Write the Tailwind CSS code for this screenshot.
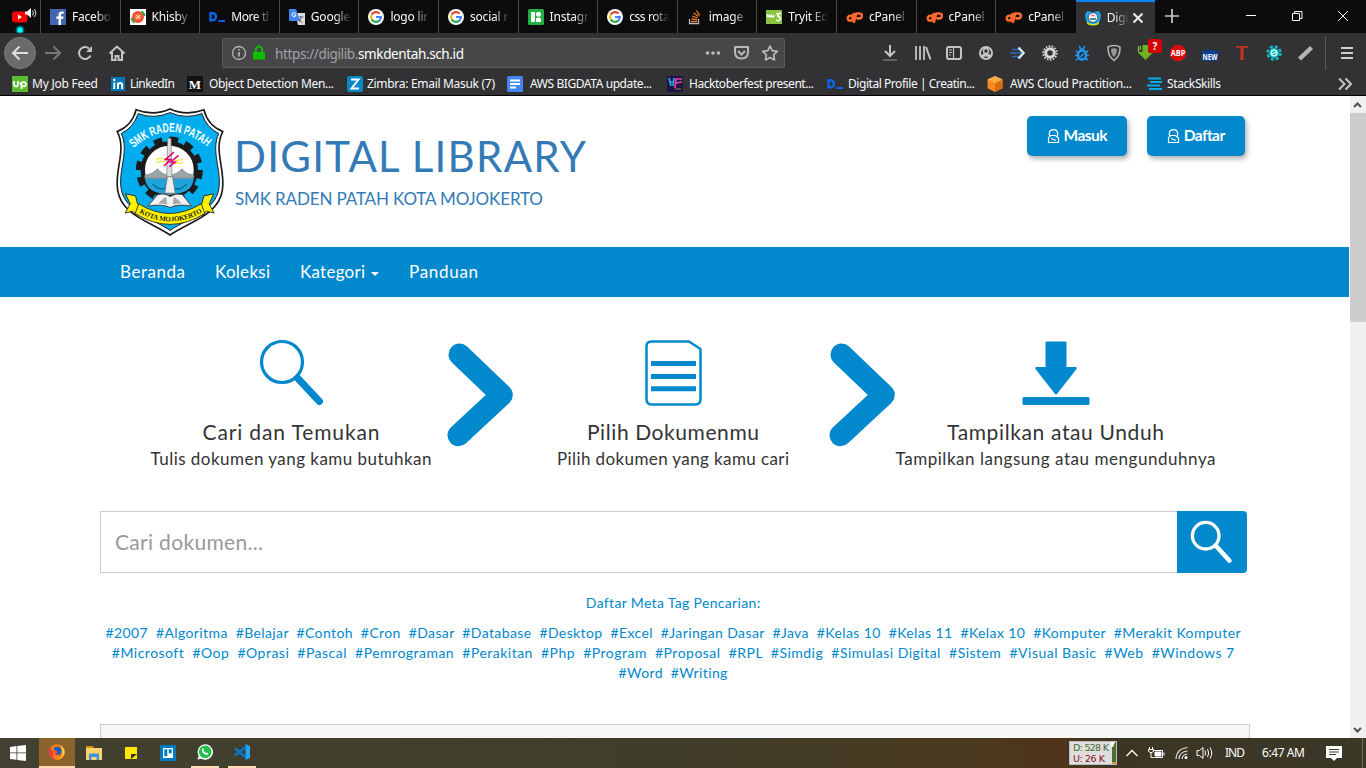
<!DOCTYPE html>
<html lang="id">
<head>
<meta charset="utf-8">
<title>Digital Library - SMK Raden Patah Kota Mojokerto</title>
<script src="https://cdn.jsdelivr.net/npm/@tailwindcss/browser@4"></script>
</head>
<body class="w-[1366px] h-[768px] overflow-hidden flex flex-col bg-white font-['Noto_Sans','Open_Sans',sans-serif] text-xs whitespace-nowrap">
<svg class="hidden">
  <symbol id="google" viewBox="0 0 16 16"><circle cx="8" cy="8" r="8" fill="#fff"/><g fill="none" stroke-width="2.2"><path d="M11.6 4.6A4.9 4.9 0 0 0 3.7 5.6" stroke="#ea4335"/><path d="M3.7 5.6a4.9 4.9 0 0 0 0 4.8" stroke="#fbbc05"/><path d="M3.7 10.4a4.9 4.9 0 0 0 7.6 1.2" stroke="#34a853"/><path d="M11.3 11.6A4.9 4.9 0 0 0 12.8 8H8" stroke="#4285f4"/></g></symbol>
  <symbol id="cpanel" viewBox="0 0 16 16"><g fill="none" stroke="#ff6c2c" stroke-width="2.4" stroke-linejoin="round"><path d="M6.6 6.3H4a2.3 2.3 0 0 0 0 4.6h1.6L7.6 3.6"/><path d="M7.2 13 9.6 4.2h3a2.2 2.2 0 0 1 0 4.6H9.8"/></g></symbol>
  <symbol id="devdash" viewBox="0 0 16 16"><path d="M1.5 4.3h2.2a3.2 3.4 0 0 1 0 7H1.5z" fill="none" stroke="#0a66ea" stroke-width="2.4"/><path d="M9.5 11H16v2H9.5z" fill="#0a66ea"/></symbol>
  <symbol id="crest" viewBox="48 30 324 392">
    <path d="M108 38Q160 58 210 36Q260 58 312 38Q324 86 369 104C340 160 378 220 368 280C358 355 270 375 210 416C150 375 62 355 52 280C42 220 80 160 51 104Q96 86 108 38Z" fill="#fff" stroke="#1b1b1b" stroke-width="5"/>
    <path d="M114 50Q162 68 210 47Q258 68 306 50Q320 92 357 110C332 162 367 222 357 278C346 343 268 364 210 402C152 364 74 343 63 278C53 222 88 162 63 110Q100 92 114 50Z" fill="#00aeef" stroke="#1b1b1b" stroke-width="3"/>
    <circle cx="208" cy="220" r="91" fill="none" stroke="#1b1b1b" stroke-width="20" stroke-dasharray="26 21.6"/>
    <circle cx="208" cy="220" r="80" fill="#fff" stroke="#1b1b1b" stroke-width="13"/>
    <path d="M134 245h148c-4 35-30 48-74 48s-70-16-74-48z" fill="#1fa5dc"/>
    <path d="M134 245V236q26-4 38-20 14 18 36 20 24-2 38-20 10 16 36 20v9z" fill="#9aa5aa" stroke="#777" stroke-width="2"/>
    <path d="M168 188q20-6 40 0t42 0M168 197q20-6 40 0t42 0" fill="none" stroke="#f5e342" stroke-width="4"/>
    <path d="M203 125h10l3 120h-16z" fill="#ddd" stroke="#777" stroke-width="2"/>
    <path d="M158 262q20 22 40 12M218 274q22 10 42-12" stroke="#0b6fa6" stroke-width="5" fill="none"/>
    <path d="M222 166l-26 22h16l-20 20M236 176l-24 20h14l-18 14" fill="none" stroke="#e6007e" stroke-width="4.5"/>
    <path d="M202 240h16l8 50h-32z" fill="#eee" stroke="#555" stroke-width="2"/>
    <path d="M173 294q22-6 37 6 18-12 37-6l28 35q-38-8-65 4-26-12-67-4z" fill="#f4f4f4" stroke="#444" stroke-width="3"/>
    <path d="M174 320l24-20 4 24zM246 320l-24-20-4 24z" fill="#aaa"/>
    <path d="M76 292l30 6 6 24 10 6-12 30-12-14-23 6 15-28zM342 292l-30 6-6 24-10 6 12 30 12-14 23 6-15-28z" fill="#fff200" stroke="#1b1b1b" stroke-width="2.5"/>
    <path d="M116 322q92 58 188 0l11 29q-105 66-210 0z" fill="#fff200" stroke="#1b1b1b" stroke-width="2.5"/>
    <path id="arcTop" d="M100 154Q208 58 322 150" fill="none"/>
    <path id="arcBottom" d="M112 346Q210 404 310 346" fill="none"/>
    <text font-family="Liberation Sans" font-weight="bold" font-size="38" fill="#fff"><textPath href="#arcTop" textLength="246" lengthAdjust="spacingAndGlyphs">SMK RADEN PATAH</textPath></text>
    <text font-family="Liberation Serif" font-weight="bold" font-size="21" fill="#1b1b1b"><textPath href="#arcBottom" textLength="200" lengthAdjust="spacingAndGlyphs" startOffset="6">KOTA MOJOKERTO</textPath></text>
  </symbol>
</svg>

<!-- Tab strip -->
<div class="h-[33px] shrink-0 flex bg-[#0c0c0d] text-[#f9f9fa] tracking-[-0.2px]">
  <div class="w-[41px] border-r border-[#4a4a4b] pl-3 pt-2">
    <svg width="26" height="25" viewBox="0 0 26 25"><rect x="0" y="3.5" width="15.5" height="11" rx="3" fill="#f00"/><path d="M6 6.500v5l4-2.500z" fill="#fff"/><circle cx="8" cy="22" r="4.5" fill="#066"/><circle cx="8" cy="22" r="2.7" fill="#0ff"/><path d="M13 3.500h2L19 0v10l-4-3.500h-2z" fill="#fff"/><path d="M20.500 2.500q2 2.500 0 5M22.500 1q3 4 0 8" fill="none" stroke="#ddd"/></svg>
  </div>
  <div class="w-[79.6px] border-r border-[#4a4a4b] flex items-center gap-1.5 pl-[9px] pt-px">
    <svg class="shrink-0" width="16" height="16" viewBox="0 0 16 16"><path d="M0 0h16v16H0z" fill="#4267b2"/><path d="M11 16V9.800h2.200l.3-2.400H11V6c0-.8.3-1.200 1.300-1.200h1.300V2.600c-3-.5-5.100.3-5.100 3.100v1.700H6.300v2.400h2.200V16z" fill="#fff"/></svg>
    <span class="w-10 mask-r-from-60%">Facebo</span></div>
  <div class="w-[79.6px] border-r border-[#4a4a4b] flex items-center gap-1.5 pl-[9px] pt-px">
    <svg class="shrink-0" width="16" height="16" viewBox="0 0 16 16"><path d="M0 0h16v16H0z" fill="#fff"/><circle cx="8" cy="8" r="4.5" fill="#ff8a48" stroke="#f4503c" stroke-width="3"/><path d="M1.500 9a6.500 6.500 0 0 0 3 4.700M14.500 7a6.500 6.500 0 0 0-3-4.700" stroke="#2a3" stroke-width="2" fill="none"/><path d="M6 6l4 4m0-4-4 4" stroke="#ffd9c0"/></svg>
    <span class="w-10 mask-r-from-60%">Khisby</span></div>
  <div class="w-[79.6px] border-r border-[#4a4a4b] flex items-center gap-1.5 pl-[9px] pt-px"><svg class="shrink-0" width="16" height="16"><use href="#devdash"/></svg><span class="w-10 mask-r-from-60% tracking-[-0.4px]">More th</span></div>
  <div class="w-[79.6px] border-r border-[#4a4a4b] flex items-center gap-1.5 pl-[9px] pt-px">
    <svg class="shrink-0" width="16" height="16" viewBox="0 0 16 16"><path d="M6 4h10v12H9z" fill="#ddd"/><path d="M0 0h7l4 12H1q-1 0-1-1z" fill="#4285f4"/><path d="M6.600 4.400A2 2 0 1 0 7 6H5" fill="none" stroke="#fff"/><path d="M9.500 8h5M12 7v1q0 3-2 5m-.3-3 3.800 4" fill="none" stroke="#667"/></svg>
    <span class="w-10 mask-r-from-60%">Google</span></div>
  <div class="w-[79.6px] border-r border-[#4a4a4b] flex items-center gap-1.5 pl-[9px] pt-px"><svg class="shrink-0" width="16" height="16"><use href="#google"/></svg><span class="w-10 mask-r-from-60%">logo lir</span></div>
  <div class="w-[79.6px] border-r border-[#4a4a4b] flex items-center gap-1.5 pl-[9px] pt-px"><svg class="shrink-0" width="16" height="16"><use href="#google"/></svg><span class="w-10 mask-r-from-60%">social r</span></div>
  <div class="w-[79.6px] border-r border-[#4a4a4b] flex items-center gap-1.5 pl-[9px] pt-px">
    <svg class="shrink-0" width="16" height="16" viewBox="0 0 16 16"><rect width="16" height="16" rx="1.5" fill="#1fb141"/><path d="M3 3h4v10H3z" fill="#fff"/><circle cx="10.5" cy="5.2" r="2.5" fill="#fff"/><path d="M8 13V9.500q2-2 5 0V13z" fill="#fff"/></svg>
    <span class="w-10 mask-r-from-60%">Instagr</span></div>
  <div class="w-[79.6px] border-r border-[#4a4a4b] flex items-center gap-1.5 pl-[9px] pt-px"><svg class="shrink-0" width="16" height="16"><use href="#google"/></svg><span class="w-10 mask-r-from-60% tracking-[-0.4px]">css rota</span></div>
  <div class="w-[79.6px] border-r border-[#4a4a4b] flex items-center gap-1.5 pl-[9px] pt-px">
    <svg class="shrink-0" width="16" height="16" viewBox="0 0 16 16" fill="none"><path d="M2.500 10v4.500h9V10" stroke="#bcbbbb" stroke-width="1.3"/><path d="M4 12.400h6M4.200 9.800l6 .8M5 7l5.600 2M6.700 4l4.700 3.500M9.400 1.500l3.200 4.800" stroke="#f48024" stroke-width="1.3"/></svg>
    <span class="w-10 mask-r-from-60%">image</span></div>
  <div class="w-[79.6px] border-r border-[#4a4a4b] flex items-center gap-1.5 pl-[9px] pt-px">
    <svg class="shrink-0" width="16" height="16" viewBox="0 0 16 16"><path d="M0 1h16v14H0z" fill="#8ac43f"/><path d="M1 5.500q.5 3.500 2.200 1Q4.500 9.500 5.500 6.500q1.500 3 3-.5M10 4.500h4q-3 2.500-2 3 3 0 2 3-1 2-4 .5" fill="none" stroke="#fff" stroke-width="1.6"/></svg>
    <span class="w-10 mask-r-from-60%">Tryit Ed</span></div>
  <div class="w-[79.6px] border-r border-[#4a4a4b] flex items-center gap-1.5 pl-[9px] pt-px"><svg class="shrink-0" width="17" height="17"><use href="#cpanel"/></svg><span class="w-10 mask-r-from-60%">cPanel</span></div>
  <div class="w-[79.6px] border-r border-[#4a4a4b] flex items-center gap-1.5 pl-[9px] pt-px"><svg class="shrink-0" width="17" height="17"><use href="#cpanel"/></svg><span class="w-10 mask-r-from-60%">cPanel</span></div>
  <div class="w-[79.6px] flex items-center gap-1.5 pl-[9px] pt-px"><svg class="shrink-0" width="17" height="17"><use href="#cpanel"/></svg><span class="w-10 mask-r-from-60%">cPanel</span></div>
  <div class="w-[79px] bg-[#323234] border-t-2 border-[#0a84ff] flex items-center gap-1.5 pl-[9px]">
    <svg class="shrink-0" width="16" height="16" viewBox="0 0 16 16"><path d="M2 1l6 1 6-1 2 4-1 6-4 4H5l-4-4-1-6z" fill="#18a4e0"/><circle cx="8" cy="7.5" r="4.7" fill="#fff" stroke="#333" stroke-width=".7"/><path d="M5 8h6v2H5z" fill="#48a"/><path d="M6 5l4 1" stroke="#e39"/><path d="M2 12q6 4 12 0v2q-6 3-12 0z" fill="#d9e021"/></svg>
    <span class="w-[22px] mask-r-from-30%">Digi</span>
    <svg class="shrink-0 -ml-[3px]" width="12" height="12" viewBox="0 0 12 12" stroke="#eee" stroke-width="2"><path d="M1.500 1.500l9 9m0-9-9 9"/></svg>
  </div>
  <svg class="ml-2.5 mt-[9px]" width="14" height="14" viewBox="0 0 14 14" stroke="#ccc" stroke-width="1.7"><path d="M7 0v14M0 7h14"/></svg>
  <div class="ml-auto flex">
    <svg width="46" height="32" viewBox="0 0 46 32" stroke="#fff"><path d="M18 15.500h10"/></svg>
    <svg width="46" height="32" viewBox="0 0 46 32" stroke="#fff" fill="none"><path d="M18.500 13.500h7v7h-7zM20.500 13.500v-2h7.500v7h-2.500"/></svg>
    <svg width="46" height="32" viewBox="0 0 46 32" stroke="#fff"><path d="M18 11l10 10m0-10L18 21"/></svg>
  </div>
</div>

<!-- Toolbar -->
<div class="h-[39px] shrink-0 bg-[#323234] flex items-center">
  <div class="flex items-center pl-1">
    <svg width="32" height="40" viewBox="0 0 32 40" fill="none"><circle cx="16" cy="20" r="15.5" fill="#6a6a6b" stroke="#7b7b7c"/><path d="M24 20H9m6.500-6.500L9 20l6.500 6.500" stroke="#e0e0e0" stroke-width="2"/></svg>
    <svg width="34" height="40" viewBox="0 0 34 40" fill="none" stroke="#77777a" stroke-width="2"><path d="M9 20h15m-6.500-6.500L24 20l-6.500 6.500"/></svg>
    <svg width="30" height="40" viewBox="0 0 30 40" fill="none" stroke="#c4c4c5" stroke-width="2"><path d="M20.500 22.500A6 6 0 1 1 19 15.500"/><path d="M22 13v6h-6z" fill="#c4c4c5" stroke="none"/></svg>
    <svg width="34" height="40" viewBox="0 0 34 40" fill="none" stroke="#c4c4c5" stroke-width="2"><path d="M9.500 20.500 17 13.500l7.500 7M12 19v8h3.500v-4h3v4H22v-8"/></svg>
  </div>
  <div class="ml-[88px] w-[563px] h-[30px] flex items-center rounded-xs border border-[#5b5b5e] bg-[#474749] pl-2">
    <svg width="16" height="16" viewBox="0 0 16 16" fill="none" stroke="#b5b5b6"><circle cx="8" cy="8" r="6.5" stroke-width="1.3"/><path d="M8 7v4.500M8 4v1.600" stroke-width="1.7"/></svg>
    <svg class="ml-1.5" width="12" height="16" viewBox="0 0 12 16"><path d="M0 7h12v7.500H0z" fill="#12bc00"/><path d="M2.800 7V4.800a3.200 3.200 0 0 1 6.400 0V7" fill="none" stroke="#12bc00" stroke-width="2"/></svg>
    <span class="ml-2.5 text-[13.5px] text-[#a3a3a5] pt-0.5" data-w="189">https://digilib.<span class="text-white">smkdentah.sch.id</span></span>
    <svg class="ml-auto" width="82" height="20" viewBox="-6 0 82 20" fill="none" stroke="#b9b9ba" stroke-width="2"><g fill="#b9b9ba" stroke="none"><circle cx="-.5" cy="10" r="1.8"/><circle cx="5" cy="10" r="1.8"/><circle cx="10.5" cy="10" r="1.8"/></g><path d="M27 4h13v5.500q-.5 6-6.500 6T27 9.500z" stroke-linejoin="round"/><path d="M30 8l3.500 3.500L37 8"/><path d="M62 3l2.200 4.700 5.100.6-3.700 3.500.9 5.100-4.500-2.500-4.500 2.500.9-5.100-3.700-3.500 5.100-.6z" stroke-width="1.7" stroke-linejoin="round"/></svg>
  </div>
  <div class="ml-[89px] flex items-center">
    <svg width="32" height="32" viewBox="0 0 32 32" fill="none" stroke="#c4c4c5" stroke-width="2"><path d="M16 8v11m-5-5 5 5 5-5"/><path d="M9 23h14" stroke="#626265"/></svg>
    <svg width="32" height="32" viewBox="0 0 32 32" fill="none" stroke="#c4c4c5" stroke-width="2"><path d="M10 9v14M14 9v14M18 9v14" stroke-width="1.8"/><path d="M20 10l4.500 12.500"/></svg>
    <svg width="32" height="32" viewBox="0 0 32 32" fill="none" stroke="#c4c4c5" stroke-width="2"><rect x="9" y="10" width="14" height="12" rx="2"/><path d="M15.500 10v12M11 13h3M11 15.500h3M11 18h2" stroke-width="1.2"/></svg>
    <svg width="32" height="32" viewBox="0 0 32 32" fill="none" stroke="#c4c4c5" stroke-width="2"><circle cx="16" cy="16" r="6"/><circle cx="16" cy="14" r="2.5" stroke-width="1.5"/><path d="M11.500 20q1-2 4.500-2t4.500 2" stroke-width="3"/></svg>
    <svg width="32" height="32" viewBox="0 0 32 32" fill="none"><path d="M10 12.500h7M8 16h11M10 19.500h7" stroke="#2b6cae" stroke-width="1.5"/><path d="M16.500 10.500 21.500 16l-5 5.500" stroke="#d8ecff" stroke-width="2.4"/></svg>
    <svg width="32" height="32" viewBox="0 0 32 32" fill="none"><circle cx="16" cy="16" r="6.8" stroke="#ddd" stroke-width="1.8" stroke-dasharray="1.6 1.45"/><circle cx="16" cy="16" r="4.3" stroke="#d8d8d8" stroke-width="3"/></svg>
    <svg width="32" height="32" viewBox="0 0 32 32" fill="none" stroke="#2196f3"><ellipse cx="16" cy="18" rx="4" ry="4.5" stroke-width="2.5"/><path d="M14.500 20l3-3.500" stroke-width="1.5"/><path d="M13.500 12h5M10 14l2.500 1.500M22 14l-2.500 1.500M9 18.500h3M20 18.500h3M10 23l2.500-1.500M22 23l-2.500-1.500M13 9l1.500 2M19 9l-1.500 2" stroke-width="1.5"/></svg>
    <svg width="32" height="32" viewBox="0 0 32 32" fill="none" stroke="#b9b9ba" stroke-width="1.5"><path d="M10 10q6-3 12 0 .5 9-6 13.500-6.500-4.500-6-13.500z"/><path d="M13 12q3-1.500 6 0 0 5-3 8-3-3-3-8z" fill="#999" stroke="none"/></svg>
    <div class="relative w-8 h-8">
      <svg width="32" height="32" viewBox="0 0 32 32"><path d="M12.500 8h7v7h4l-8 8-8-8h5z" fill="#6fb324"/><path d="M8.500 9v6M10.500 9v4" stroke="#8cc63f" stroke-width="1.2"/></svg>
      <span class="absolute left-[18px] top-[2px] w-3.5 h-3.5 rounded-xs bg-[#d70000] text-white text-[10px] leading-[14px] font-bold text-center">?</span>
    </div>
    <svg width="32" height="32" viewBox="0 0 32 32"><path d="M12.700 8h6.600L24 12.700v6.600L19.300 24h-6.600L8 19.300v-6.600z" fill="#d50d0d"/><text x="16" y="19.200" text-anchor="middle" font-family="Open Sans" font-weight="bold" font-size="8.5" fill="#fff" textLength="14.5" lengthAdjust="spacingAndGlyphs">ABP</text></svg>
    <svg width="32" height="32" viewBox="0 0 32 32"><path d="M8 14h6l-1-3 5 3 2-3v3h4v10H8z" fill="#0b3f92"/><text x="16" y="22.500" text-anchor="middle" font-family="Open Sans" font-weight="bold" font-size="8" fill="#fff" textLength="15" lengthAdjust="spacingAndGlyphs">NEW</text></svg>
    <svg width="32" height="32" viewBox="0 0 32 32"><path d="M10 9h12v3.500l-1-2h-3.500V22l1 1h-5l1-1V10.500H11l-1 2z" fill="#c8341e"/></svg>
    <svg width="32" height="32" viewBox="0 0 32 32" fill="none"><circle cx="16" cy="16" r="6.5" stroke="#16b8c4" stroke-width="2.5" stroke-dasharray="3.1 2"/><circle cx="16" cy="16" r="5" fill="#16b8c4"/><circle cx="16" cy="16" r="2.8" stroke="#d5ffff" stroke-width="1.3"/><path d="M13 17l6-2" stroke="#d5ffff"/></svg>
    <svg width="32" height="32" viewBox="0 0 32 32"><path d="M9.500 22 21.500 10.500" stroke="#b5b5b6" stroke-width="4.5"/></svg>
  </div>
  <div class="ml-[3px] w-px h-[34px] bg-[#5b5b5e]"></div>
  <svg class="ml-[15px]" width="13" height="14" viewBox="0 0 13 14" stroke="#d0d0d1" stroke-width="2"><path d="M0 2h12M0 7h12M0 12h12"/></svg>
</div>

<!-- Bookmarks -->
<div class="h-6 shrink-0 bg-[#323234] border-b border-black flex items-center pl-3 text-[#f9f9fa]">
  <div class="w-[98px] flex items-center gap-1"><svg width="16" height="16" viewBox="0 0 16 16"><path d="M0 0h16v16H0z" fill="#5bbc2e"/><path d="M2 5v3q0 2.500 2 2.500T6 8V5M9.500 13V6.500m0 2A2.200 2.200 0 1 1 12 10.500q-2 0-4-4" fill="none" stroke="#fff" stroke-width="1.7"/></svg><span data-w="66">My Job Feed</span></div>
  <div class="w-[77px] flex items-center gap-1"><svg width="16" height="16" viewBox="0 0 16 16"><path d="M1 1h14v14H1z" fill="#0077b5"/><path d="M4.300 6.500V13M8 13V6.500M8 9q.5-2 2.200-2 2 0 2 2.500V13" fill="none" stroke="#fff" stroke-width="1.9"/><circle cx="4.3" cy="4" r="1.2" fill="#fff"/></svg><span data-w="45">LinkedIn</span></div>
  <div class="w-40 flex items-center gap-1.5"><svg width="16" height="16" viewBox="0 0 16 16"><path d="M0 0h16v16H0z" fill="#111"/><text x="8" y="12.5" text-anchor="middle" font-family="Liberation Serif" font-weight="bold" font-size="13" fill="#fff">M</text></svg><span data-w="125">Object Detection Men...</span></div>
  <div class="w-40 flex items-center gap-1"><svg width="16" height="16" viewBox="0 0 16 16"><rect width="16" height="16" rx="2" fill="#0a87c4"/><path d="M4 3.500h7.500L4.500 12.500H12" fill="none" stroke="#fff" stroke-width="2"/></svg><span data-w="128">Zimbra: Email Masuk (7)</span></div>
  <div class="w-40 flex items-center gap-[7px]"><svg width="16" height="16" viewBox="0 0 16 16"><rect width="16" height="16" rx="1.5" fill="#4285f4"/><path d="M3 4.500h10M3 8h10M3 11.500h6" stroke="#fff" stroke-width="1.8"/></svg><span data-w="122">AWS BIGDATA update...</span></div>
  <div class="w-40 flex items-center gap-1.5"><svg width="16" height="16" viewBox="0 0 16 16"><path d="M0 0h16v16H0z" fill="#1c1547"/><path d="M2 2l2 8M7 2l-1 8M3 6h4" stroke="#2aa6e8" stroke-width="1.7"/><path d="M15 3H9L8 12M9 7l6-1" stroke="#e7449c" stroke-width="1.7" fill="none"/><path d="M8 13h6" stroke="#b07a3c"/></svg><span data-w="125">Hacktoberfest present...</span></div>
  <div class="w-40 flex items-center gap-[5px]"><svg width="16" height="16"><use href="#devdash"/></svg><span data-w="127">Digital Profile | Creatin...</span></div>
  <div class="w-40 flex items-center gap-[7px]"><svg width="16" height="16" viewBox="0 0 16 16"><path d="M8 0l7.500 3.500v8.700L8 16 .5 12.200V3.500z" fill="#f68b1f"/><path d="M8 7l7.500-3v8.200L8 16z" fill="#dd6b10"/><path d="M8 0l7.500 3.500L8 7 .5 3.500z" fill="#fbab4a"/></svg><span data-w="122">AWS Cloud Practition...</span></div>
  <div class="flex items-center gap-1"><svg width="16" height="16" viewBox="0 0 16 16" stroke="#00adef" stroke-width="1.8"><path d="M1 2.500h13M3 6h12M0 9.500h13M2 13h13"/></svg><span data-w="54">StackSkills</span></div>
  <svg class="ml-auto mr-3.5" width="14" height="14" viewBox="0 0 14 14" fill="none" stroke="#c4c4c5" stroke-width="2"><path d="M1 1.500 6.500 7 1 12.500M7.500 1.500 13 7l-5.500 5.500"/></svg>
</div>

<!-- Page -->
<div class="h-[642px] shrink-0 flex">
  <main class="w-[1350px] flex flex-col font-[Lato,sans-serif] text-[#333]">
    <header class="h-[151px] shrink-0 flex pl-[115px] pr-[105px]">
      <svg class="mt-[11px]" width="110" height="130"><use href="#crest" width="110" height="130"/></svg>
      <div class="ml-2.5 pt-[34px] flex flex-col items-start text-[#337ab7]">
        <h1 class="-ml-px text-[42px] leading-[52px]" data-w="352">DIGITAL LIBRARY</h1>
        <p class="mt-[5px] text-[17px] leading-6" data-w="308">SMK RADEN PATAH KOTA MOJOKERTO</p>
      </div>
      <div class="ml-auto pt-5 flex gap-5 text-white text-base font-bold">
        <a class="w-[100px] h-10 rounded-[5px] bg-[#0288cc] shadow-[2px_3px_5px_rgba(0,0,0,0.3)] flex items-center justify-center gap-1"><svg width="13" height="16" viewBox="0 0 13 16" fill="none" stroke="#fff" stroke-width="1.2"><path d="M3 8.500C1 4.500 3 1.600 6.500 1.600S12 4.500 10 9"/><path d="M3.500 7.500h5L11.500 10v4.500h-10V10zM4 10.500l5 2"/></svg><span class="text-[15.5px]" data-w="44">Masuk</span></a>
        <a class="w-[98px] h-10 rounded-[5px] bg-[#0288cc] shadow-[2px_3px_5px_rgba(0,0,0,0.3)] flex items-center justify-center gap-1"><svg width="13" height="16" viewBox="0 0 13 16" fill="none" stroke="#fff" stroke-width="1.2"><path d="M3 8.500C1 4.500 3 1.600 6.500 1.600S12 4.500 10 9"/><path d="M3.500 7.500h5L11.500 10v4.500h-10V10zM4 10.500l5 2"/></svg><span class="text-[15.5px]" data-w="41">Daftar</span></a>
      </div>
    </header>
    <nav class="h-[50px] shrink-0 w-[1349px] bg-[#0288cc] flex items-center gap-[30px] pl-[120px] text-[17px] text-white">
      <span data-w="65">Beranda</span><span data-w="55">Koleksi</span>
      <span class="flex items-center gap-1.5"><span data-w="65">Kategori</span><svg class="mt-1" width="8" height="4" viewBox="0 0 8 4"><path d="M0 0h8L4 4z" fill="#fff"/></svg></span>
      <span data-w="69">Panduan</span>
    </nav>

    <section class="h-[214px] shrink-0 flex pl-[135px] pt-[43px]">
      <div class="w-[312px] flex flex-col items-center">
        <svg width="66" height="68" viewBox="0 0 66 68" fill="none" stroke="#0288cc"><circle cx="24" cy="22" r="20.5" stroke-width="3.2"/><path d="M39.500 38 61.500 61.500" stroke-width="7" stroke-linecap="round"/></svg>
        <h2 class="mt-2.5 text-[21px] leading-[28px]" data-w="177">Cari dan Temukan</h2>
        <p class="text-[17px] leading-[26px]" data-w="281">Tulis dokumen yang kamu butuhkan</p>
      </div>
      <svg width="66" height="110" viewBox="0 0 66 110" fill="none" stroke="#0288cc" stroke-width="22" stroke-linecap="round" stroke-linejoin="round"><path d="M12.500 14.500 54.800 55 11.500 95.300"/></svg>
      <div class="w-[316px] pl-1 flex flex-col items-center">
        <svg class="ml-[2px]" width="58" height="68" viewBox="0 0 58 68" fill="none" stroke="#0288cc" stroke-width="2.5"><path d="M6.500 1.500H44L55.500 9v50q0 5.500-5 5.500h-44q-5 0-5-5.500V6.500q0-5 5-5z" stroke-linejoin="round"/><path d="M6 23.500h45M6 36.500h45M6 48.700h45" stroke-width="5"/></svg>
        <h2 class="mt-2.5 text-[21px] leading-[28px]" data-w="172">Pilih Dokumenmu</h2>
        <p class="text-[17px] leading-[26px]" data-w="232">Pilih dokumen yang kamu cari</p>
      </div>
      <svg width="66" height="110" viewBox="0 0 66 110" fill="none" stroke="#0288cc" stroke-width="22" stroke-linecap="round" stroke-linejoin="round"><path d="M12.500 14.500 54.800 55 11.500 95.300"/></svg>
      <div class="w-[321px] flex flex-col items-center">
        <svg width="68" height="68" viewBox="0 0 68 68" fill="#0288cc"><path d="M24.500 1.500h19q1 0 1 1V27H54q1.500.5.500 2L35 54q-1 1-2 0L13.500 29q-1-1.500.5-2h9.500V2.500q0-1 1-1z"/><rect x=".5" y="57" width="67" height="8" rx="1.5"/></svg>
        <h2 class="mt-2.5 text-[21px] leading-[28px]" data-w="217">Tampilkan atau Unduh</h2>
        <p class="text-[17px] leading-[26px]" data-w="320">Tampilkan langsung atau mengunduhnya</p>
      </div>
    </section>

    <div class="h-[62px] shrink-0 flex pl-[100px]">
      <div class="w-[1077px] border border-r-0 border-[#ccc] flex items-center pl-[14px] text-[21px] text-[#999]"><span data-w="148">Cari dokumen...</span></div>
      <div class="w-[70px] bg-[#0288cc] rounded-r-[4px]"><svg width="70" height="62" viewBox="0 0 70 62" fill="none" stroke="#fff"><circle cx="28.7" cy="24.7" r="13.3" stroke-width="3.3"/><path d="M39.500 35.500l13 14.200" stroke-width="4.5" stroke-linecap="round"/></svg></div>
    </div>

    <div class="h-[151px] shrink-0 pl-[100px] w-[1246px] pt-5 flex flex-col items-center text-sm leading-5 text-[#0288cc]">
      <p class="mb-2.5" data-w="174">Daftar Meta Tag Pencarian:</p>
      <p class="whitespace-pre" data-w="1135">#2007  #Algoritma  #Belajar  #Contoh  #Cron  #Dasar  #Database  #Desktop  #Excel  #Jaringan Dasar  #Java  #Kelas 10  #Kelas 11  #Kelax 10  #Komputer  #Merakit Komputer</p>
      <p class="whitespace-pre" data-w="1122">#Microsoft  #Oop  #Oprasi  #Pascal  #Pemrograman  #Perakitan  #Php  #Program  #Proposal  #RPL  #Simdig  #Simulasi Digital  #Sistem  #Visual Basic  #Web  #Windows 7</p>
      <p class="whitespace-pre" data-w="109">#Word  #Writing</p>
    </div>
    <div class="ml-[100px] w-[1150px] h-[14px] border border-b-0 border-[#ccc] bg-[#f7f7f7]"></div>
  </main>
  <div class="w-4 bg-[#f0f0f0] flex flex-col items-center">
    <svg width="16" height="17" viewBox="0 0 16 17" fill="none" stroke="#505050" stroke-width="2"><path d="M4 11l3.500-3.500L11 11"/></svg>
    <div class="w-4 h-[209px] bg-[#cdcdcd]"></div>
    <svg class="mt-auto" width="16" height="17" viewBox="0 0 16 17" fill="none" stroke="#505050" stroke-width="2"><path d="M4 7l3.500 3.500L11 7"/></svg>
  </div>
</div>

<!-- Taskbar -->
<div class="h-[30px] shrink-0 flex items-center text-white bg-[linear-gradient(90deg,#424030_0,#403d29_50%,#493a20_70%,#50351a_77%,#3c3523_82%,#3b3828_100%)]">
  <svg class="ml-2.5" width="16" height="16" viewBox="0 0 16 16" fill="#fff"><path d="M0 2l6.500-1v6.500H0zM7.300.9 16 0v7.500H7.300zM0 8.300h6.500v6.500L0 14zM7.300 8.300H16V16l-8.700-1z"/></svg>
  <div class="ml-[13px] w-9 h-[30px] bg-[#8a642c] border-b-2 border-[#ffdcb4] flex items-center justify-center">
    <svg width="16" height="16" viewBox="0 0 16 16"><circle cx="8" cy="8" r="7.8" fill="#ff7a1a"/><path d="M12 1q5 5 3 10-3 5-8 4.500 8-2 6-8z" fill="#ffd035"/><path d="M1 4q-2 8 5 11.500Q2 11 4 8L1 4z" fill="#f5274e"/><circle cx="8.3" cy="7" r="4.2" fill="#0b62c9"/><path d="M4 5l3 1.500L9 8 6.500 9.500 10 11l-4 .5L3 8z" fill="#ff5a1f"/></svg>
  </div>
  <svg class="ml-[11px]" width="16" height="15" viewBox="0 0 16 15"><path d="M0 0h7l1 2H0z" fill="#d9900f"/><path d="M0 2h16v12H0z" fill="#fcd36b"/><path d="M3 14V8.500q0-1 1-1h8q1 0 1 1V14h-2.500v-3h-5v3z" fill="#3b94dd"/></svg>
  <svg class="ml-[23px]" width="12" height="13" viewBox="0 0 12 13"><path d="M0 0h12v12H0z" fill="#ffe800"/><path d="M6 12V7h6z" fill="#333"/></svg>
  <svg class="ml-[23px]" width="16" height="16" viewBox="0 0 16 16"><path d="M0 0h16v16H0z" fill="#0079bf"/><path d="M3 3h10v10H3z" fill="#fff"/><path d="M4.300 4.300h3v7h-3zM8.700 4.300h3v4h-3z" fill="#0079bf"/></svg>
  <div class="ml-[15px] w-7 h-[30px] border-b-2 border-[#ffdcb4] flex items-center justify-center">
    <svg width="16" height="16" viewBox="0 0 16 16"><path d="M.4 15.600 1.700 12A7.700 7.700 0 1 1 4.500 14.700z" fill="#fff"/><circle cx="8.2" cy="7.8" r="6.3" fill="#22bf4b"/><path d="M5.300 4.500q1-.7 1.500.8l-.4 1q1 2 2.800 2.800l1-.6q1.600.5.9 1.700Q8.500 12 5.700 8.500 4 6 5.300 4.500z" fill="#fff"/></svg>
  </div>
  <div class="ml-[9px] w-7 h-[30px] border-b-2 border-[#ffdcb4] flex items-center justify-center">
    <svg width="16" height="16" viewBox="0 0 16 16"><path d="M11.500 0 16 2v12l-4.500 2z" fill="#2aa3ef"/><path d="M1 4.500 12 13.500M1 11.500 12 2.500" stroke="#0a7acb" stroke-width="2.4"/></svg>
  </div>
  <div class="ml-auto w-12 h-6 border border-[#bbb] bg-[#dedede] flex justify-between pl-[3px] text-[9.5px] leading-[11px] font-['DejaVu_Sans']">
    <div class="flex flex-col items-start"><span class="text-[#496b2c]" data-w="36">D: 528 K</span><span class="text-[#8a0f20]" data-w="32">U: 26 K</span></div>
    <svg width="5" height="22" viewBox="0 0 5 22"><path d="M1 0h4v22H1z" fill="#4d7031"/><path d="M0 0h4L2 5H0z" fill="#fff"/><path d="M1 21h4" stroke="#e8912d" stroke-width="2"/></svg>
  </div>
  <svg class="ml-[9px]" width="12" height="8" viewBox="0 0 12 8" fill="none" stroke="#fff" stroke-width="1.3"><path d="M.5 7 6 1.500 11.500 7"/></svg>
  <svg class="ml-[10px]" width="17" height="14" viewBox="0 0 17 14" fill="none" stroke="#fff"><path d="M5.500 4.500h9v7h-8M16 6.500v3"/><path d="M7 6h6v4H7z" fill="#fff"/><path d="M1.500 1v2.500M4.500 1v2.500M.5 3.500h5v2q-2.500 2.500-5 0zM3 7v4.500h3"/></svg>
  <svg class="ml-[10px]" width="13" height="14" viewBox="0 0 13 14" fill="none" stroke="#ddd" stroke-width="1.2"><path d="M1 13Q1.500 2.500 12.500 1.500M4 13q.5-7.500 8.500-8M7 13q.5-4.500 5.500-5"/><circle cx="11" cy="11.5" r="1.5" fill="#fff" stroke="none"/></svg>
  <svg class="ml-2" width="18" height="14" viewBox="0 0 18 14" fill="none" stroke="#fff"><path d="M1 4.500h2.500L7 1.500v11L3.500 9.500H1z"/><path d="M9 4.500q1.500 2.500 0 5M11.500 3q2.500 4 0 8M14 1.500q3.500 5.500 0 11"/></svg>
  <span class="ml-[11px]" data-w="20">IND</span>
  <span class="ml-[17px]" data-w="43">6:47 AM</span>
  <svg class="ml-[21px] mr-[20px]" width="16" height="17" viewBox="0 0 16 17"><path d="M0 1h16v12h-5l-3 3-3-3H0z" fill="#fff"/><path d="M3 4.500h10M3 7h10M3 9.500h7" stroke="#3b3828"/></svg>
  <div class="w-px h-[30px] bg-[#6c6a5c] mr-[3px]"></div>
</div>

<script>
// Tracks every label out (or in) so that it spans the width given in data-w.
function fitLabels() {
  document.querySelectorAll('[data-w]').forEach(function (el) {
    el.style.letterSpacing = '0px';
    el.style.marginRight = '0px';
    var range = document.createRange();
    range.selectNodeContents(el);
    var natural = range.getBoundingClientRect().width;
    var gap = (parseFloat(el.dataset.w) - natural) / (el.textContent.length - 1);
    el.style.letterSpacing = gap.toFixed(3) + 'px';
    el.style.marginRight = (-gap).toFixed(3) + 'px';
  });
}
window.addEventListener('load', function () {
  fitLabels();
  requestAnimationFrame(fitLabels);
});
</script>
</body>
</html>
